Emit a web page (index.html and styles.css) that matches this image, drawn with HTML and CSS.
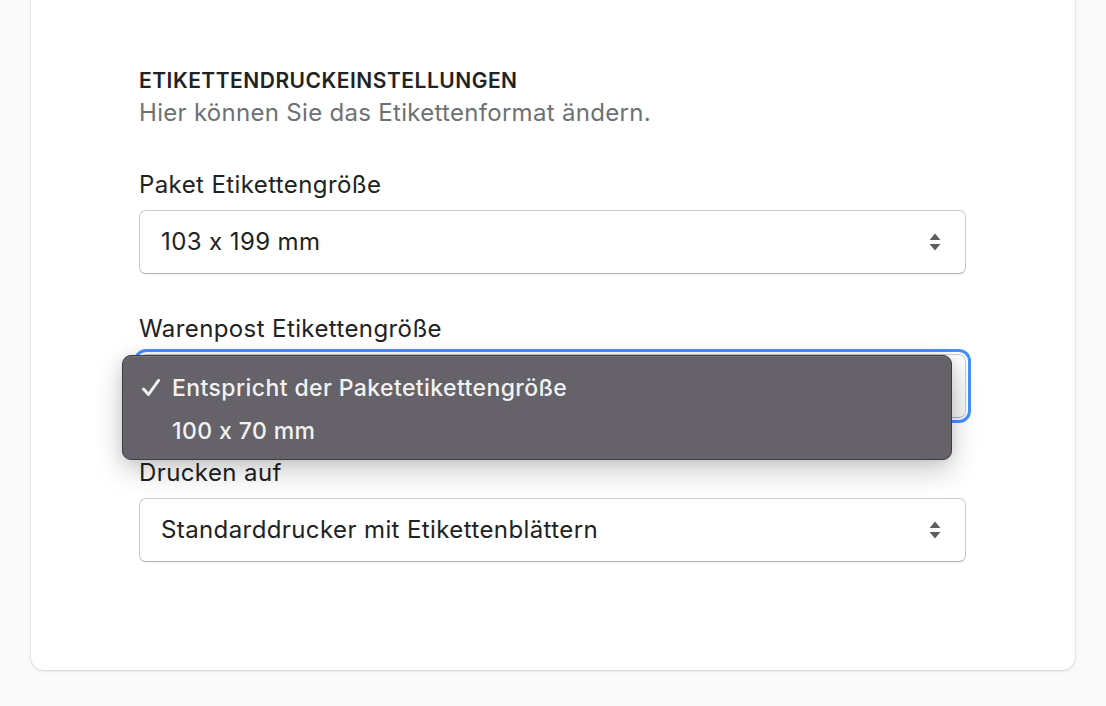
FILE: index.html
```html
<!DOCTYPE html>
<html lang="de">
<head>
<meta charset="utf-8">
<title>Etikettendruckeinstellungen</title>
<link rel="stylesheet" href="styles.css">
</head>
<body>
<main class="page">
  <section class="card">
    <header class="section-head">
      <h2 class="subheading">ETIKETTENDRUCKEINSTELLUNGEN</h2>
      <p class="description">Hier können Sie das Etikettenformat ändern.</p>
    </header>

    <div class="field">
      <label class="label">Paket Etikettengröße</label>
      <div class="select">
        <span class="select-value">103 x 199 mm</span>
        <svg class="select-arrows" width="12" height="18" viewBox="0 0 12 18"><path d="M6 0.5 L11.5 7 H0.5 Z M6 17.5 L11.5 11 H0.5 Z" fill="#5c5f62"/></svg>
      </div>
    </div>

    <div class="field">
      <label class="label">Warenpost Etikettengröße</label>
      <div class="select-wrap">
        <div class="select is-focused">
          <span class="select-value is-covered">Entspricht der Paketetikettengröße</span>
          <svg class="select-arrows" width="12" height="18" viewBox="0 0 12 18"><path d="M6 0.5 L11.5 7 H0.5 Z M6 17.5 L11.5 11 H0.5 Z" fill="#5c5f62"/></svg>
        </div>
        <ul class="menu">
          <li class="menu-item is-checked">
            <svg class="check" width="20" height="18" viewBox="0 0 20 18"><path d="M2.5 10 L7.5 15.5 L17.5 1.5" fill="none" stroke="#f2f2f3" stroke-width="3" stroke-linecap="round" stroke-linejoin="round"/></svg>
            <span>Entspricht der Paketetikettengröße</span>
          </li>
          <li class="menu-item"><span class="check-space"></span><span>100 x 70 mm</span></li>
        </ul>
      </div>
    </div>

    <div class="field">
      <label class="label">Drucken auf</label>
      <div class="select">
        <span class="select-value">Standarddrucker mit Etikettenblättern</span>
        <svg class="select-arrows" width="12" height="18" viewBox="0 0 12 18"><path d="M6 0.5 L11.5 7 H0.5 Z M6 17.5 L11.5 11 H0.5 Z" fill="#5c5f62"/></svg>
      </div>
    </div>
  </section>
</main>
</body>
</html>
```

FILE: styles.css
```css
* { box-sizing: border-box; }

html, body {
  margin: 0;
  padding: 0;
  background: #fafafa;
  font-family: Inter, "Noto Sans", "Liberation Sans", sans-serif;
  font-feature-settings: "calt" 0;
  color: #202223;
}

.page {
  padding: 0 31px;
  height: 706px;
  overflow: hidden;
}

.card {
  width: 1044px;
  background: #ffffff;
  border-radius: 0 0 13px 13px;
  box-shadow: 0 0 0 1px rgba(63, 63, 68, 0.06), 0 1px 3px rgba(63, 63, 68, 0.15);
  padding: 68px 109px 108px 108px;
}

.section-head {
  margin-bottom: 42px;
}

.subheading {
  margin: 0;
  font-size: 21px;
  line-height: 26px;
  font-weight: 600;
  letter-spacing: 0.5px;
  color: #202223;
}

.description {
  margin: 4px 0 0;
  font-size: 24px;
  line-height: 30px;
  letter-spacing: 0.3px;
  color: #6d7175;
}

.field {
  display: flex;
  flex-direction: column;
  gap: 10px;
  margin-bottom: 40px;
}

.field:last-child { margin-bottom: 0; }

.label {
  font-size: 24px;
  line-height: 30px;
  letter-spacing: 0.4px;
  color: #202223;
}

.select-wrap {
  position: relative;
}

.select {
  height: 64px;
  display: flex;
  align-items: center;
  justify-content: space-between;
  padding: 0 24px 0 21px;
  border: 1px solid #c9cccf;
  border-bottom-color: #aeb4b9;
  border-radius: 7px;
  background: #ffffff;
  box-shadow: 0 1px 0 rgba(22, 29, 37, 0.05);
}

.select-value {
  font-size: 24px;
  line-height: 30px;
  letter-spacing: 0.4px;
  color: #202223;
}

.select-value.is-covered {
  visibility: hidden;
}

.select.is-focused {
  outline: 3px solid #458fff;
  outline-offset: 2px;
  background: linear-gradient(#ffffff, #f4f4f4);
}

.menu {
  position: absolute;
  left: -17px;
  top: 1px;
  width: 830px;
  margin: 0;
  padding: 10px 0 7px;
  list-style: none;
  background: #656369;
  border: 1px solid #3d3c40;
  border-radius: 9px;
  box-shadow: inset 0 1px 0 rgba(255, 255, 255, 0.12), 0 10px 28px rgba(0, 0, 0, 0.22), 0 0 12px rgba(0, 0, 0, 0.08);
}

.menu-item {
  display: flex;
  align-items: center;
  height: 43px;
  padding-left: 18px;
  font-size: 23px;
  font-weight: 500;
  letter-spacing: 0.4px;
  color: #f2f2f3;
}

.check,
.check-space {
  flex: none;
  width: 20px;
  height: 18px;
  margin-right: 11px;
}
```
